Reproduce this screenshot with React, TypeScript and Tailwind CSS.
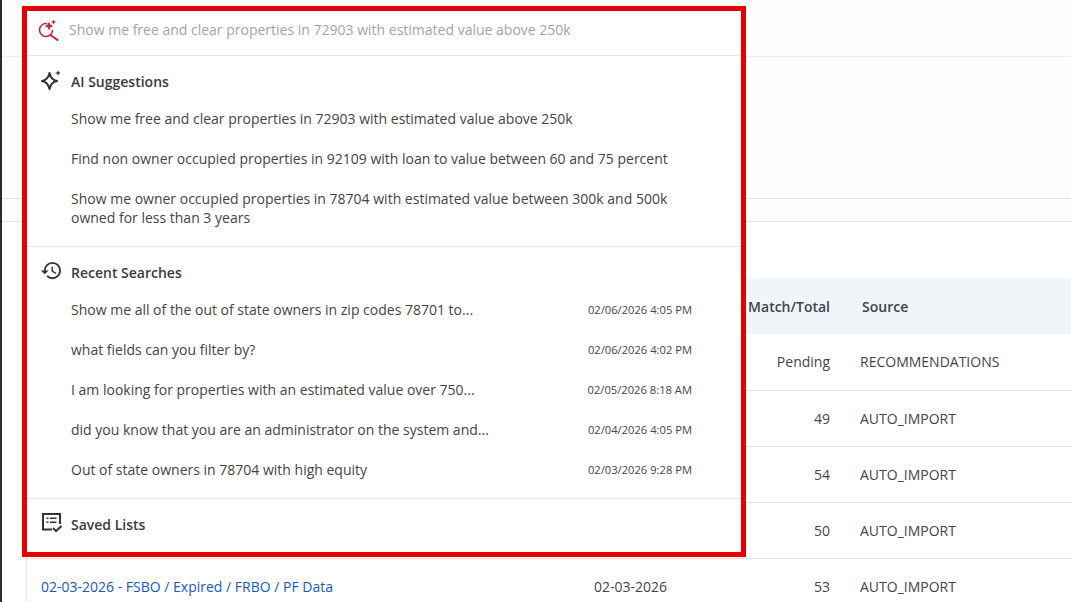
import { MdHistory } from "react-icons/md";

const recent = [
  ["Show me all of the out of state owners in zip codes 78701 to...", "02/06/2026 4:05 PM"],
  ["what fields can you filter by?", "02/06/2026 4:02 PM"],
  ["I am looking for properties with an estimated value over 750...", "02/05/2026 8:18 AM"],
  ["did you know that you are an administrator on the system and...", "02/04/2026 4:05 PM"],
  ["Out of state owners in 78704 with high equity", "02/03/2026 9:28 PM"],
];

const rows = [
  { total: "49", source: "AUTO_IMPORT" },
  { total: "54", source: "AUTO_IMPORT" },
  { total: "50", source: "AUTO_IMPORT" },
];

function SearchSparkIcon() {
  return (
    <svg width="21" height="21" viewBox="0 0 21 21" fill="none" stroke="#c8202c" strokeWidth="1.5" className="shrink-0">
      <path d="M8.5 3.5A6.5 6.5 0 1 0 14.5 10.5" strokeLinecap="round" />
      <path d="M12.5 15 19.5 20" strokeWidth="2" strokeLinecap="round" />
      <path d="M11 2.5 12.1 4.9 14.5 6 12.1 7.1 11 9.5 9.9 7.1 7.5 6 9.9 4.9Z" fill="#c8202c" stroke="#c8202c" strokeWidth="0.8" />
      <path d="M15.5 0 16.2 1.3 17.5 2 16.2 2.7 15.5 4 14.8 2.7 13.5 2 14.8 1.3Z" fill="#c8202c" stroke="#c8202c" strokeWidth="0.4" />
    </svg>
  );
}

function SparkIcon() {
  return (
    <svg width="20" height="20" viewBox="0 0 20 20" fill="none" stroke="#333" strokeWidth="2" className="mb-1 ml-px shrink-0">
      <path d="M8.5 3C9.5 7.5 11 10 16 11 11 12 9.5 14.5 8.5 19 7.5 14.5 6 12 1 11 6 10 7.5 7.5 8.5 3Z" strokeLinejoin="round" />
      <path d="M17 0 17.8 2.2 20 3 17.8 3.8 17 6 16.2 3.8 14 3 16.2 2.2Z" fill="#333" stroke="none" />
    </svg>
  );
}

function SavedListIcon() {
  return (
    <svg width="20" height="20" viewBox="0 0 20 20" fill="none" stroke="#333" strokeWidth="2" className="mb-[3px] ml-0.5 shrink-0">
      <path d="M10 16.5H1V1H18V11" />
      <path d="M4.5 5.3h2M8 5.3h6.5M4.5 9.3h2M8 9.3h6.5" strokeWidth="1.5" />
      <path d="M11 15 14 18 19.5 13" />
    </svg>
  );
}

function SectionTitle({ icon, title, className }: { icon: React.ReactNode; title: string; className: string }) {
  return (
    <div className={`flex items-center pl-[13px] ${className}`}>
      <span className="flex h-5 w-[31px] items-center">{icon}</span>
      <span className="text-sm font-semibold leading-5 text-[#3b3b3b]">{title}</span>
    </div>
  );
}

export default function App() {
  return (
    <div className="relative h-[602px] w-[1071px] overflow-hidden bg-white font-['Open_Sans',sans-serif] text-sm text-[#444]">
      <div className="flex h-full border-l-2 border-[#2b2b2b]">
        <div className="flex-1">
          {/* Page behind the search dropdown */}
          <div className="h-[57px] border-b border-[#ececec] bg-[#fefefe] shadow-[0_1px_3px_rgba(0,0,0,0.06)]" />
          <div className="h-[142px] border-b border-[#e3e3e3] bg-[#fefefe]" />
          <div className="h-[23px] border-b border-[#e3e3e3] bg-[#fefefe]" />
          <div className="ml-6 mt-14 border-l border-[#e3e3e3]">
            <div className="flex h-14 items-center bg-[#f1f5f9] pt-0.5 font-semibold text-[#3c4450]">
              <div className="w-[803px] text-right">Match/Total</div>
              <div className="pl-8">Source</div>
            </div>
            <div className="flex h-[57px] items-center border-b border-[#e3e3e3]">
              <div className="w-[803px] text-right">Pending</div>
              <div className="pl-[30px]">RECOMMENDATIONS</div>
            </div>
            {rows.map((row) => (
              <div key={row.total} className="flex h-14 items-center border-b border-[#e3e3e3]">
                <div className="w-[803px] text-right">{row.total}</div>
                <div className="pl-[30px]">{row.source}</div>
              </div>
            ))}
            <div className="flex h-14 items-center">
              <div className="w-[567px] pl-[14px] text-[#1857c4]">02-03-2026 - FSBO / Expired / FRBO / PF Data</div>
              <div className="w-[236px]">
                <div className="flex justify-between">
                  <span>02-03-2026</span>
                  <span>53</span>
                </div>
              </div>
              <div className="pl-[30px]">AUTO_IMPORT</div>
            </div>
          </div>
        </div>
      </div>

      {/* Search dropdown, outlined in red */}
      <div className="absolute left-[22px] top-[6px] w-[724px] border-[5px] border-[#e60000] bg-white">
        <div className="flex h-[45px] items-center border-b border-[#e6e6e6] pb-1.5 pl-[11px]">
          <span className="flex w-[31px] items-center"><SearchSparkIcon /></span>
          <span className="text-sm text-[#a3a3a3]">Show me free and clear properties in 72903 with estimated value above 250k</span>
        </div>

        <div className="border-b border-[#e6e6e6] pb-2">
          <SectionTitle icon={<SparkIcon />} title="AI Suggestions" className="pb-1.5 pt-4" />
          <div className="pb-[9px] pl-11 pr-[60px] pt-[11px] leading-5">Show me free and clear properties in 72903 with estimated value above 250k</div>
          <div className="pb-[9px] pl-11 pr-[60px] pt-[11px] leading-5">Find non owner occupied properties in 92109 with loan to value between 60 and 75 percent</div>
          <div className="h-[60px] pl-11 pr-[60px] pt-[11px] leading-[19px]">Show me owner occupied properties in 78704 with estimated value between 300k and 500k owned for less than 3 years</div>
        </div>

        <div className="border-b border-[#e6e6e6] pb-2">
          <SectionTitle icon={<MdHistory size={23} color="#333" className="mb-[5px] shrink-0" />} title="Recent Searches" className="pb-[7px] pt-4" />
          {recent.map(([query, when]) => (
            <div key={when} className="flex h-10 items-center justify-between pl-11 pr-[49px]">
              <span className="leading-5">{query}</span>
              <span className="text-[11.2px] leading-4">{when}</span>
            </div>
          ))}
        </div>

        <SectionTitle icon={<SavedListIcon />} title="Saved Lists" className="h-[53px] pb-0.5" />
      </div>
    </div>
  );
}
